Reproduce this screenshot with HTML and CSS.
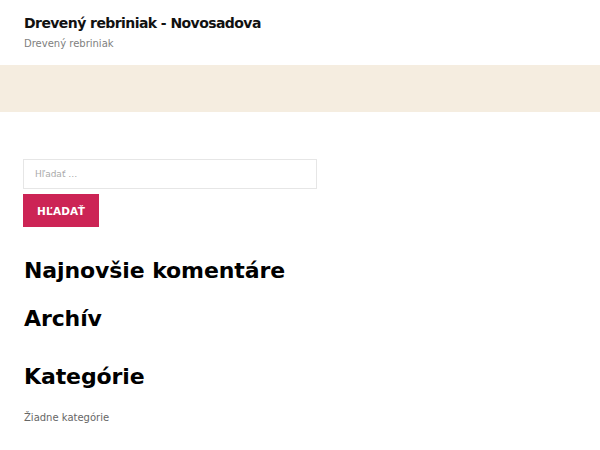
FILE: index.html
```html
<!DOCTYPE html>
<html lang="sk">
<head>
<meta charset="utf-8">
<title>Drevený rebriniak - Novosadova</title>
<link rel="stylesheet" href="styles.css">
</head>
<body>
<header class="site-header">
  <p class="site-title">Drevený rebriniak - Novosadova</p>
  <p class="site-desc">Drevený rebriniak</p>
</header>
<div class="band"></div>
<main class="content">
  <form class="search">
    <input class="search-field" type="search" placeholder="Hľadať …">
    <button class="search-btn" type="button">Hľadať</button>
  </form>
  <h2 class="widget-title first">Najnovšie komentáre</h2>
  <h2 class="widget-title">Archív</h2>
  <h2 class="widget-title cat">Kategórie</h2>
  <p class="empty">Žiadne kategórie</p>
</main>
</body>
</html>
```
FILE: styles.css
```css
* { box-sizing: border-box; }
html, body { margin: 0; padding: 0; background: #fff; }
body { font-family: "DejaVu Sans", sans-serif; color: #000; }
.site-header { padding: 13px 24px 0; height: 65px; }
.site-title { margin: 0; font-size: 14px; font-weight: bold; line-height: 20px; color: #111; letter-spacing: -0.57px; }
.site-desc { margin: 3px 0 0; font-size: 10px; line-height: 16px; color: #808080; }
.band { height: 47px; background: #f5ede0; }
.content { padding: 47px 23px 0; }
.search { display: flex; flex-direction: column; align-items: flex-start; gap: 5px; }
.search-field { width: 294px; height: 30px; border: 1px solid #e6e6e6; padding: 0 11px; font-family: "DejaVu Sans", sans-serif; font-size: 9px; color: #999; background: #fff; outline: none; }
.search-field::placeholder { color: #aaa; }
.search-btn { width: 76px; height: 33px; border: 0; background: #cc2455; color: #fff; font-family: "DejaVu Sans", sans-serif; font-weight: bold; font-size: 10.5px; text-transform: uppercase; letter-spacing: 0.2px; padding: 0; }
.widget-title { margin: 0 0 0 1px; font-size: 22px; line-height: 28px; font-weight: bold; letter-spacing: -0.1px; }
.widget-title.first { margin-top: 30px; }
.widget-title + .widget-title { margin-top: 20px; }
.widget-title.cat { margin-top: 30px; }
.empty { margin: 19px 0 0 1px; font-size: 10px; color: #666; line-height: 16px; }
```
